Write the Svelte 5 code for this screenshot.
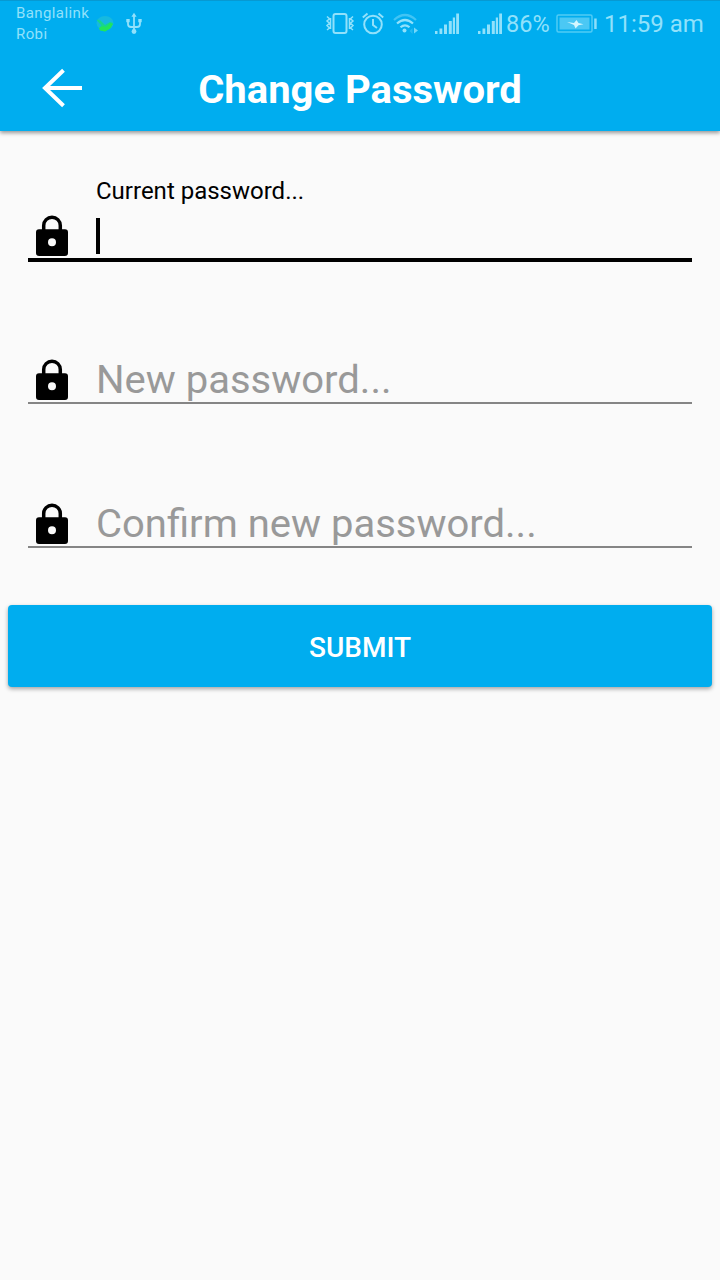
<script>
  const fields = [
    { label: 'Current password...', focused: true },
    { label: 'New password...', focused: false },
    { label: 'Confirm new password...', focused: false }
  ];
</script>

{#snippet signal()}
  <svg class="signal" width="26" height="22" viewBox="0 0 26 22" fill="currentColor">
    <path d="M1 18h2.500v3H1zM5.500 15.500h2.800V21H5.500zM10 11.500h3V21h-3zM14.800 8h3v13h-3zM18.800 4.500h2.200V21h-2.200zM22.200 .5h2.800V21h-2.800z" />
  </svg>
{/snippet}

<div class="screen">
  <header>
    <div class="status">
      <div class="carriers"><span>Banglalink</span><span>Robi</span></div>
      <svg class="app" width="20" height="18" viewBox="0 0 20 18">
        <ellipse cx="10" cy="8" rx="8.500" ry="7" fill="#16b9df" />
        <path d="M1.500 5Q5 4 8 8l2 2 5-3 3 1-2 5-6 3.500L4 14l2-4Z" fill="#16d58e" />
        <path d="M4 13l4-2 3 1 4-4 3 1-3 4.500-5 3-5-1Z" fill="#20e55b" />
      </svg>
      <svg class="usb" width="18" height="24" viewBox="0 0 18 24" fill="none" stroke="currentColor" stroke-width="1.800">
        <path d="M9 3v17M3 9v3q0 3 3 3h3M15 9v3q0 3-3 3H9" />
        <path d="M9 .8l2.600 4H6.400zM1.300 7h3.400v3.200H1.300zM13.300 7h3.400v3.200h-3.400z" fill="currentColor" stroke="none" />
        <circle cx="9" cy="19.500" r="2.400" fill="currentColor" stroke="none" />
      </svg>
      <svg class="vibrate" width="30" height="24" viewBox="0 0 30 24" fill="none" stroke="currentColor" stroke-width="1.800">
        <rect x="8.500" y="2" width="13" height="19" rx="2" stroke-width="2" />
        <path d="M2 4.500l2.500 2.300L2 9l2.500 2.300L2 13.500 4.500 16 2 18M5.500 6v11M28 4.500l-2.500 2.300L28 9l-2.500 2.300 2.500 2.200-2.500 2.500 2.500 2M24.500 6v11" stroke-width="1.500" />
      </svg>
      <svg class="alarm" width="24" height="24" viewBox="0 0 24 24" fill="none" stroke="currentColor" stroke-width="2">
        <circle cx="12" cy="12.500" r="8.800" />
        <path d="M12 7v6l4 3M1.800 5.500l4.700-4M22.200 5.500l-4.700-4" />
      </svg>
      <svg class="wifi" width="26" height="22" viewBox="0 0 26 22" fill="none" stroke="currentColor" stroke-width="2.200">
        <path d="M1 7Q12 -3 23 7" opacity=".45" />
        <path d="M4 10.500Q12 3.500 20 10.500M7.500 14.300q4.500-4 9 0" />
        <circle cx="11.500" cy="17.500" r="2" fill="currentColor" stroke="none" />
        <path d="M21 14.500l4 3-4 3z" fill="currentColor" stroke="none" opacity=".8" />
        <path d="M19.500 15l-3 3 3 3z" fill="currentColor" stroke="none" opacity=".25" />
      </svg>
      {@render signal()}
      {@render signal()}
      <span class="percent">86%</span>
      <svg class="battery" width="42" height="22" viewBox="0 0 42 22">
        <rect x="1" y="2" width="35" height="17" rx="1.500" fill="none" stroke="#50cbf5" stroke-width="1.500" />
        <rect x="3.500" y="4.500" width="30" height="12" fill="#4bc8f4" />
        <path d="M11 9l7 1 2.500-3 2 3 5 1.200-5 1-3 3.300-1.500-3.500z" fill="#d5f7ff" />
        <path d="M38.200 5.500h2.500v10.500h-2.500z" fill="#8cdefa" />
      </svg>
      <span class="time">11:59 am</span>
    </div>
    <div class="toolbar">
      <svg width="42" height="42" viewBox="0 0 42 42" fill="none" stroke="#fff" stroke-width="4">
        <path d="M22.500 3.300L4 21l18.500 17.700M4 21H41" />
      </svg>
      <h1>Change Password</h1>
    </div>
  </header>

  <main>
    {#each fields as field}
      <div class="field" class:focused={field.focused}>
        {#if field.focused}<div class="label">{field.label}</div>{/if}
        <div class="entry">
          <svg width="34" height="42" viewBox="0 0 34 42">
            <path d="M8.700 16V10.500a8.300 8.300 0 0 1 16.600 0v5.500" fill="none" stroke="#000" stroke-width="3.500" />
            <path fill="#000" fill-rule="evenodd" d="M4 14.200h26q3 0 3 3v20.800q0 3-3 3H4q-3 0-3-3V17.200q0-3 3-3ZM17 23.300a4 4 0 1 0 0 8 4 4 0 0 0 0-8Z" />
          </svg>
          {#if field.focused}<i class="caret"></i>{:else}<span>{field.label}</span>{/if}
        </div>
      </div>
    {/each}
    <button><span>SUBMIT</span></button>
  </main>
</div>

<style>
  :global(body) { background: #fafafa; }
  .screen {
    width: 720px;
    height: 1280px;
    overflow: hidden;
    background: #fafafa;
    font-family: Roboto, sans-serif;
  }
  header {
    box-sizing: border-box;
    height: 131px;
    background: #00adef;
    border-top: 1px solid #0799d2;
    box-shadow: 0 2px 4px rgba(0, 0, 0, .4);
  }
  svg { display: block; flex: none; }
  .status {
    display: flex;
    align-items: center;
    height: 45px;
    padding-left: 16px;
    color: #91e1fb;
    white-space: nowrap;
  }
  .carriers {
    display: flex;
    flex-direction: column;
    width: 74px;
    font-size: 15px;
    line-height: 21px;
    letter-spacing: .4px;
  }
  .entry span, h1 {
    transform: scaleY(.95);
    transform-origin: 0 79%;
  }
  .app { margin-left: 5px; }
  .usb { margin-left: 10px; }
  .vibrate { margin-left: 182px; }
  .alarm { margin-left: 6px; }
  .wifi { margin-left: 8px; }
  .signal { margin-left: 15px; }
  .signal + .signal { margin-left: 17px; }
  .percent { width: 46px; margin-left: 3px; font-size: 23.500px; }
  .battery { margin-left: 4px; }
  .time { margin-left: 6px; font-size: 24px; }
  .toolbar {
    display: grid;
    grid-template-columns: 42px 1fr 42px;
    align-items: center;
    height: 84px;
    padding: 0 41px;
  }
  h1 {
    margin: 4px 0 0;
    color: #fff;
    text-align: center;
    font-size: 40px;
    line-height: 48px;
    font-weight: 700;
  }
  main { padding: 31px 8px 0; }
  .field {
    display: flex;
    flex-direction: column;
    justify-content: flex-end;
    box-sizing: border-box;
    height: 144px;
    margin: 0 20px;
    border-bottom: 2px solid #858585;
    color: #999;
  }
  .field.focused { height: 100px; border-bottom: 4px solid #000; }
  .field.focused + .field { height: 142px; }
  .label {
    padding-left: 68px;
    color: #000;
    font-size: 24px;
    line-height: 30px;
    margin-bottom: 8px;
  }
  .entry {
    display: flex;
    align-items: center;
    height: 44px;
    padding-left: 7px;
    font-size: 40px;
    line-height: 44px;
  }
  .entry svg { margin-right: 27px; }
  .caret { width: 4px; height: 36px; background: #000; }
  button {
    display: block;
    width: 704px;
    height: 82px;
    margin-top: 57px;
    padding: 2px 0 0;
    border: 0;
    border-radius: 4px;
    background: #00adef;
    box-shadow: 0 2px 4px rgba(0, 0, 0, .35);
    color: #fff;
    font: 500 28px Roboto, sans-serif;
  }
  button span {
    display: inline-block;
    transform: scaleY(.97);
    transform-origin: 0 70%;
  }
</style>
